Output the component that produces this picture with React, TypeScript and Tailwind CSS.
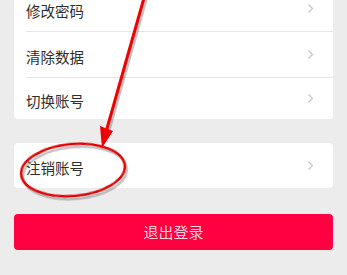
import React from 'react';

const font = { fontFamily: '"Noto Sans CJK SC", "Noto Sans", sans-serif' };

function Chevron() {
    return (
        <svg width="7" height="11" viewBox="0 0 7 11" className="mr-[19px]">
            <polyline
                points="1.5,1.5 5.5,5.5 1.5,9.5"
                fill="none"
                stroke="#c4c4c4"
                strokeWidth="1.1"
            />
        </svg>
    );
}

function Row({
    label,
    height,
    last,
}: {
    label: string;
    height: string;
    last?: boolean;
}) {
    return (
        <div className={`ml-3 flex items-center justify-between ${height} ${last ? '' : 'border-b border-[#e6e6e6]'}`}>
            <span className="pt-1 text-[14.5px] text-[#2e2e2e]">{label}</span>
            <Chevron />
        </div>
    );
}

export default function App() {
    return (
        <div
            className="relative h-[275px] w-[347px] overflow-hidden bg-[#ececec]"
            style={font}
        >
            <div className="mx-[14px] -mt-[14px] rounded-[4px] bg-white">
                <Row label="修改密码" height="h-[46px]" />
                <Row label="清除数据" height="h-[46px]" />
                <Row label="切换账号" height="h-[41px]" last />
            </div>
            <div className="mx-[14px] mt-[24px] rounded-[4px] bg-white">
                <Row label="注销账号" height="h-[45px]" last />
            </div>
            <button className="mx-[14px] mt-[26px] flex h-[36px] w-[319px] items-center justify-center rounded-[4px] bg-[#ff0040] text-[15px] text-[#ffd0dc]">
                退出登录
            </button>

            <svg
                className="pointer-events-none absolute left-0 top-0"
                width="347"
                height="275"
                viewBox="0 0 347 275"
            >
                <g opacity="0.35" transform="translate(2,2)">
                    <line x1="144" y1="-2" x2="106" y2="132" stroke="#555" strokeWidth="3" />
                    <ellipse cx="73" cy="171" rx="52" ry="26" transform="rotate(-5 73 171)" fill="none" stroke="#555" strokeWidth="2.5" />
                </g>
                <line x1="144" y1="-2" x2="106" y2="132" stroke="#ee0000" strokeWidth="3" />
                <polygon points="100,126 113,131 102,148" fill="#ee0000" />
                <ellipse
                    cx="73"
                    cy="170"
                    rx="52"
                    ry="26"
                    transform="rotate(-5 73 170)"
                    fill="none"
                    stroke="#e00000"
                    strokeWidth="2.5"
                />
            </svg>
        </div>
    );
}
